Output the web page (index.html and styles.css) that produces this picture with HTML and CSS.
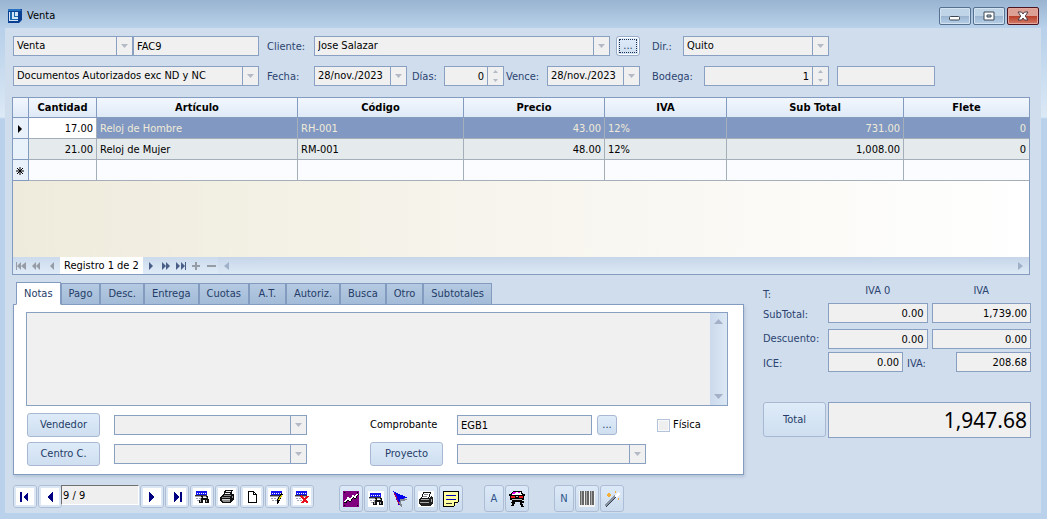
FILE: index.html
```html
<!DOCTYPE html>
<html lang="es">
<head>
<meta charset="utf-8">
<title>Venta</title>
<link rel="stylesheet" href="styles.css">
</head>
<body>
<svg class="defs" aria-hidden="true">
  <symbol id="down" viewBox="0 0 7 4"><path d="M0 0h7L3.500 4z"/></symbol>
  <symbol id="spin" viewBox="0 0 5 12"><path d="M0 3L2.500 0 5 3zM0 9h5L2.500 12z"/></symbol>
  <symbol id="table" viewBox="0 0 16 16">
    <path fill="#1414f0" d="M2 2h11v4H2z"/><path fill="#fff" d="M3 4h1v1H3zM5 4h1v1H5zM7 4h1v1H7zM9 4h1v1H9zM11 4h1v1h-1z"/>
    <path fill="#a4a4b4" d="M1 7h12v1H1zM2 9h2v1H2zM5 9h2v1H5zM8 9h2v1H8zM3 11h2v1H3zM6 11h2v1H6z"/>
    <path fill="#333" d="M1 6h12v1H1z"/>
  </symbol>
  <symbol id="find" viewBox="0 0 16 16">
    <use href="#table"/>
    <path fill="#111" d="M7 7h2v2h3V7h2v2l1 2v3h-4v-3H9v3H5v-3l2-2z"/><path fill="#aaa" d="M7 8h1v1H7zM12 8h1v1h-1zM6 10h1v3H6zM12 11h1v2h-1z"/>
  </symbol>
  <symbol id="printer" viewBox="0 0 16 16">
    <path fill="#111" d="M6 1h8v1h-1v3h2v5l-3 4H3l-2-3V8l3-3 1-1z"/>
    <path fill="#eee" d="M7 2h5v1H7zM6 4h5v1H6z"/><path fill="#8c8c8c" d="M5 6h7v1H5zM3 8h8v1H3zM13 7h1v2h-1zM3 11h8v2H4z"/><path fill="#ccc" d="M3 10h8v1H3z"/>
  </symbol>
</svg>
<div class="window">
  <header class="titlebar">
    <svg class="logo" viewBox="0 0 14 14"><path fill="#0b3f91" d="M0 0h14v11l-3 3H0z"/><path fill="#2673c4" d="M0 0h12l2 2H0z"/><path fill="#d3e6f6" d="M1 3h9v9H1z"/><path fill="#1a67b0" d="M2 3h2v7h6v1H2zM6 3h1v4h3v1H6z"/></svg>
    <h1>Venta</h1>
    <div class="controls">
      <button class="control" type="button" aria-label="Minimizar"><svg viewBox="0 0 12 12"><rect x=".5" y="6.500" width="10" height="3.500" rx="1" fill="#fff" stroke="#3d4653"/></svg></button>
      <button class="control" type="button" aria-label="Maximizar"><svg viewBox="0 0 12 12"><path fill="#fff" fill-rule="evenodd" stroke="#3d4653" d="M1 2h10v8H1zM4 5v2h4V5z"/></svg></button>
      <button class="control close" type="button" aria-label="Cerrar"><svg viewBox="0 0 12 12"><path fill="#fff" stroke="#4c3b45" d="M1 2h3.500L6 4l1.500-2H11L8.300 6 11 10H7.500L6 8l-1.500 2H1l2.700-4z"/></svg></button>
    </div>
  </header>
  <main class="content">
    <section class="filters">
      <div class="line first">
        <span class="combo type"><select aria-label="Tipo"><option>Venta</option></select><svg class="arrow"><use href="#down"/></svg></span>
        <input class="grow" aria-label="Número" value="FAC9">
      </div>
      <div class="line">
        <label class="lead" for="cliente">Cliente:</label>
        <span class="combo grow"><select id="cliente"><option>Jose Salazar</option></select><svg class="arrow"><use href="#down"/></svg></span>
        <button class="push more focused" type="button">...</button>
      </div>
      <div class="line">
        <label class="dir" for="dir">Dir.:</label>
        <span class="combo address"><select id="dir"><option>Quito</option></select><svg class="arrow"><use href="#down"/></svg></span>
      </div>
      <div class="line">
        <span class="combo grow"><select aria-label="Autorización"><option>Documentos Autorizados exc ND y NC</option></select><svg class="arrow"><use href="#down"/></svg></span>
      </div>
      <div class="line">
        <label class="lead" for="fecha">Fecha:</label>
        <span class="combo grow"><select id="fecha"><option>28/nov./2023</option></select><svg class="arrow"><use href="#down"/></svg></span>
        <label class="days" for="dias">Días:</label>
        <span class="combo count"><input class="num" id="dias" value="0"><svg class="arrow spin"><use href="#spin"/></svg></span>
        <label class="due" for="vence">Vence:</label>
        <span class="combo grow"><select id="vence"><option>28/nov./2023</option></select><svg class="arrow"><use href="#down"/></svg></span>
      </div>
      <div class="line">
        <label class="store" for="bodega">Bodega:</label>
        <span class="combo warehouse"><input class="num" id="bodega" value="1"><svg class="arrow spin"><use href="#spin"/></svg></span>
        <input class="extra" aria-label="Nombre de bodega">
      </div>
    </section>

    <section class="grid">
      <table>
        <colgroup><col class="c-mark"><col class="c-qty"><col class="c-item"><col class="c-code"><col class="c-price"><col class="c-iva"><col class="c-sub"><col class="c-freight"></colgroup>
        <thead><tr><th></th><th>Cantidad</th><th>Artículo</th><th>Código</th><th>Precio</th><th>IVA</th><th>Sub Total</th><th>Flete</th></tr></thead>
        <tbody>
          <tr class="selected"><th><svg class="mark" viewBox="0 0 8 8"><path d="M2 0l4 4-4 4z"/></svg></th><td class="num current">17.00</td><td>Reloj de Hombre</td><td>RH-001</td><td class="num">43.00</td><td>12%</td><td class="num">731.00</td><td class="num">0</td></tr>
          <tr class="even"><th></th><td class="num">21.00</td><td>Reloj de Mujer</td><td>RM-001</td><td class="num">48.00</td><td>12%</td><td class="num">1,008.00</td><td class="num">0</td></tr>
          <tr><th><svg class="mark" viewBox="0 0 8 8"><path fill="none" stroke="#000" d="M4 0v8M0 4h8M1 1l6 6M7 1L1 7"/></svg></th><td></td><td></td><td></td><td></td><td></td><td></td><td></td></tr>
        </tbody>
      </table>
      <div class="blank"></div>
      <div class="pager">
        <button type="button" class="off" aria-label="Primero"><svg viewBox="0 0 10 8"><path d="M0 0h1v8H0zM5 0v8L1 4zM10 0v8L5 4z"/></svg></button>
        <button type="button" class="off" aria-label="Página anterior"><svg viewBox="0 0 10 8"><path d="M5 0v8L1 4zM9 0v8L5 4z"/></svg></button>
        <button type="button" class="off" aria-label="Anterior"><svg viewBox="0 0 10 8"><path d="M7 0v8L3 4z"/></svg></button>
        <span class="record">Registro 1 de 2</span>
        <button type="button" aria-label="Siguiente"><svg viewBox="0 0 10 8"><path d="M3 0v8l4-4z"/></svg></button>
        <button type="button" aria-label="Página siguiente"><svg viewBox="0 0 10 8"><path d="M1 0v8l4-4zM5 0v8l4-4z"/></svg></button>
        <button type="button" aria-label="Último"><svg viewBox="0 0 10 8"><path d="M9 0h1v8H9zM0 0v8l4-4zM5 0v8l4-4z"/></svg></button>
        <button type="button" class="off" aria-label="Agregar"><svg viewBox="0 0 10 8"><path d="M1 3h8v2H1zM4 0h2v8H4z"/></svg></button>
        <button type="button" class="off" aria-label="Quitar"><svg viewBox="0 0 10 8"><path d="M1 3h9v2H1z"/></svg></button>
        <span class="scroll"><svg viewBox="0 0 5 8"><path d="M5 0v8L0 4z"/></svg><svg viewBox="0 0 5 8"><path d="M0 0v8l5-4z"/></svg></span>
      </div>
    </section>

    <div class="lower">
      <section class="details">
        <nav class="tabs" role="tablist">
          <button type="button" role="tab" aria-selected="true">Notas</button><button type="button" role="tab">Pago</button><button type="button" role="tab">Desc.</button><button type="button" role="tab">Entrega</button><button type="button" role="tab">Cuotas</button><button type="button" role="tab">A.T.</button><button type="button" role="tab">Autoriz.</button><button type="button" role="tab">Busca</button><button type="button" role="tab">Otro</button><button type="button" role="tab">Subtotales</button>
        </nav>
        <div class="panel">
          <div class="notes">
            <textarea aria-label="Notas"></textarea>
            <span class="rail"><svg viewBox="0 0 9 5"><path d="M0 5h9L4.500 0z"/></svg><svg viewBox="0 0 9 5"><path d="M0 0h9L4.500 5z"/></svg></span>
          </div>
          <div class="fields">
            <button class="push" type="button">Vendedor</button>
            <span class="combo"><select aria-label="Vendedor"><option></option></select><svg class="arrow"><use href="#down"/></svg></span>
            <label class="voucher" for="comp">Comprobante</label>
            <div class="line">
              <input class="voucher-no" id="comp" value="EGB1">
              <button class="push small" type="button">...</button>
              <label class="check"><input type="checkbox">Física</label>
            </div>
            <button class="push" type="button">Centro C.</button>
            <span class="combo"><select aria-label="Centro de costo"><option></option></select><svg class="arrow"><use href="#down"/></svg></span>
            <button class="push offset" type="button">Proyecto</button>
            <span class="combo project"><select aria-label="Proyecto"><option></option></select><svg class="arrow"><use href="#down"/></svg></span>
          </div>
        </div>
      </section>
      <section class="totals">
        <div class="row heads"><span class="name">T:</span><span class="head">IVA 0</span><span class="head">IVA</span></div>
        <div class="row"><label class="name" for="st">SubTotal:</label><input class="num" id="st" value="0.00"><input class="num" aria-label="SubTotal IVA" value="1,739.00"></div>
        <div class="row disc"><label class="name" for="ds">Descuento:</label><input class="num" id="ds" value="0.00"><input class="num" aria-label="Descuento IVA" value="0.00"></div>
        <div class="row"><label class="name" for="ice">ICE:</label><input class="num tax" id="ice" value="0.00"><label class="iva" for="iva">IVA:</label><input class="num tax" id="iva" value="208.68"></div>
        <div class="grand"><button class="push" type="button">Total</button><input class="num" aria-label="Total" value="1,947.68"></div>
      </section>
    </div>

    <footer class="toolbar">
      <div class="group nav">
        <button class="tool" type="button" aria-label="Primero"><svg viewBox="0 0 16 16"><path fill="#000080" d="M3 3h2v10H3zM11 3v10L6 8z"/></svg></button>
        <button class="tool" type="button" aria-label="Anterior"><svg viewBox="0 0 16 16"><path fill="#000080" d="M11 3v10L5 8z"/></svg></button>
        <input class="position" aria-label="Posición" value="9 / 9">
        <button class="tool" type="button" aria-label="Siguiente"><svg viewBox="0 0 16 16"><path fill="#000080" d="M5 3v10l6-5z"/></svg></button>
        <button class="tool" type="button" aria-label="Último"><svg viewBox="0 0 16 16"><path fill="#000080" d="M11 3h2v10h-2zM5 3v10l5-5z"/></svg></button>
        <button class="tool" type="button" aria-label="Buscar"><svg viewBox="0 0 16 16"><use href="#find"/></svg></button>
        <button class="tool" type="button" aria-label="Imprimir"><svg viewBox="0 0 16 16"><use href="#printer"/></svg></button>
        <button class="tool" type="button" aria-label="Nuevo"><svg viewBox="0 0 16 16"><path fill="#fff" stroke="#000" d="M4.500 2.500h5l3 3v8h-8zM9.500 2.500v3h3"/></svg></button>
        <button class="tool" type="button" aria-label="Editar"><svg viewBox="0 0 16 16"><use href="#table"/><path fill="#000" d="M12 4l2 1-4 8-2 2v-4z"/><path fill="#d4c800" d="M12 6l1 1-3 5-1-1z"/></svg></button>
        <button class="tool" type="button" aria-label="Eliminar"><svg viewBox="0 0 16 16"><use href="#table"/><path fill="none" stroke="#e8101c" stroke-width="2" d="M7 7l7 7M14 7l-6 7"/></svg></button>
      </div>
      <div class="group tall actions">
        <button class="tool" type="button" aria-label="Gráfico"><svg viewBox="0 0 16 16"><path fill="#800080" d="M0 0h16v16H0z"/><path fill="#000" d="M1 1h1v1H1zM14 1h1v1h-1zM1 14h1v1H1zM14 14h1v1h-1z"/><path fill="none" stroke="#000" stroke-width="2" d="M2 12l3-4 2 2 3-4 2 1 3-4"/><path fill="none" stroke="#fff" stroke-width="1.500" d="M2 11l3-4 2 2 3-4 2 1 2-3"/></svg></button>
        <button class="tool" type="button" aria-label="Buscar documento"><svg viewBox="0 0 16 16"><path fill="#fff" d="M0 0h16v16H0z"/><use href="#find"/></svg></button>
        <button class="tool" type="button" aria-label="Seleccionar"><svg viewBox="0 0 16 16"><path fill="#808890" d="M1 1l7 15 1-1-1-5 7-1z"/><path fill="#0000f0" d="M0 0l15 7-8 1-1 7z"/><path fill="#a00060" d="M0 0l3 4 4 10H6z"/></svg></button>
        <button class="tool" type="button" aria-label="Imprimir documento"><svg viewBox="0 0 16 16"><path fill="#fff" d="M0 0h16v16H0z"/><path fill="#fff" stroke="#111" d="M5.500 1.500h7l-2 6h-7z"/><path stroke="#888" d="M6 3.500h4M5 5.500h4"/><path fill="#222" d="M1 8l2-2v2h8l2-3 2 1v6l-3 3H3l-2-2z"/><path fill="#aaa" d="M3 8h8v1H3zM2 11h9v1H2zM13 8h1v3h-1z"/></svg></button>
        <button class="tool" type="button" aria-label="Nota"><svg viewBox="0 0 16 16"><path fill="#ffffa0" d="M1 1h14v10l-4 4H1z"/><path fill="#000" d="M0 0h16v1H0zM0 0h1v16H0zM15 0h1v11h-1zM0 15h11v1H0zM11 11h4v1h-3v3h-1z"/><path fill="#0000c0" d="M3 4h10v1H3zM3 8h10v1H3z"/><path fill="#333" d="M3 12h6v1H3z"/></svg></button>
      </div>
      <div class="group tall letters">
        <button class="tool letter" type="button">A</button>
        <button class="tool" type="button" aria-label="Transporte"><svg viewBox="0 0 16 16"><path fill="#000" d="M4 0h9l1 3h2v2h-1v4h-2v1h2v2h-2v1h1v2h1v1h-3v-2h-1v-3H6v2H5v2H2v-1h1v-2H2v-1h1V9H1V5H0V3h2z"/><path fill="#fff" d="M5 1h7l1 3H3z"/><path fill="#f000f0" d="M4 1h3v1H6v1H3zM9 1h2v1H9z"/><path fill="#f01818" d="M2 5h4v2H2zM10 5h4v2h-4z"/><path fill="#bbb" d="M7 5h2v1H7zM3 8h10v1H3z"/></svg></button>
      </div>
      <div class="group tall extras">
        <button class="tool letter" type="button">N</button>
        <button class="tool" type="button" aria-label="Código de barras"><svg viewBox="0 0 16 16"><path fill="#f4f4f4" d="M0 0h16v16H0z"/><path fill="#666" d="M1 0h1v14H1zM3 0h2v14H3zM6 0h1v14H6zM8 0h2v14H8zM11 0h1v14h-1zM13 0h2v14h-2z"/><path fill="#aaa" d="M2 0h1v14H2zM7 0h1v14H7zM12 0h1v14h-1z"/></svg></button>
        <button class="tool" type="button" aria-label="Asistente"><svg viewBox="0 0 16 16"><path stroke="#8a95a4" stroke-width="2" d="M1 15L11 5"/><path stroke="#333f50" stroke-width="1" d="M2 16L12 6"/><path fill="#fff" d="M10 5l4-4 2 2-4 4z"/><path fill="#f5ae35" d="M5 1l1 2 2 1-2 1-1 2-1-2-2-1 2-1zM11 0l1 1-1 1-1-1zM14 7l1 1-1 1-1-1z"/></svg></button>
      </div>
    </footer>
  </main>
</div>
</body>
</html>
```
FILE: styles.css
```css
* { box-sizing: border-box; }
body { margin: 0; }
body, button, input, select, textarea {
  font: 11px/14px "DejaVu Sans Condensed", "DejaVu Sans", sans-serif;
  color: #000;
}
button, input, select, textarea { margin: 0; padding: 0; border: 0; border-radius: 0; }
svg { display: block; }
.defs { position: absolute; width: 0; height: 0; }
label, .totals { color: #2b4470; }

.window {
  min-height: 100vh;
  display: flex;
  flex-direction: column;
  padding: 0 6px 6px 5px;
  background: linear-gradient(#99b4d1, #b9d1ea 28px, #b9d1ea 34px, #dce9f6 117px, #b9d1ea 119px);
}
.titlebar { height: 28px; display: flex; align-items: center; gap: 5px; padding: 4px 2px 0 3px; }
.titlebar h1 { flex: 1; margin: 0; font-size: 11px; font-weight: 400; }
.logo { width: 14px; height: 14px; }
.controls { display: flex; gap: 2px; }
.control {
  width: 32px;
  height: 18px;
  display: grid;
  place-items: center;
  border: 1px solid #56718f;
  border-radius: 2px;
  box-shadow: inset 0 0 0 1px #d3e3f2;
  background: linear-gradient(#c0d4e8 50%, #9ab4d0 50%, #b7d0e8);
}
.control svg { width: 12px; height: 12px; }
.control.close { border-color: #4c1420; box-shadow: inset 0 0 0 1px #e5a79e; background: linear-gradient(#dda095 50%, #b83d28 50%, #d27c68); }

.content { flex: 1; padding: 8px 11px 0 8px; background: #d0dded; }
.filters {
  display: grid;
  grid-template-columns: 246px minmax(373px, 1fr) 382px;
  gap: 10px 8px;
}
.line { display: flex; align-items: center; }
.filters .line:nth-child(3n) { padding-left: 4px; }
.filters label { padding-top: 2px; }
.grow { flex: 1; min-width: 0; }
.combo, .line > input, .totals input {
  height: 20px;
  border: 1px solid #8aa0c2;
  background: #f0f0f0;
}
.combo { display: grid; grid-template-columns: minmax(0, 1fr) 16px; }
.combo > select, .combo > input {
  grid-area: 1 / 1 / 2 / 3;
  width: 100%;
  height: 18px;
  appearance: none;
  background: none;
  padding: 0 19px 0 3px;
}
.line > input { padding: 0 3px; }
.num { text-align: right; }
.arrow {
  grid-area: 1 / 2;
  width: 16px;
  height: 18px;
  padding: 7px 4px 7px 4px;
  border-left: 1px solid #8aa0c2;
  fill: #b4b9c6;
  pointer-events: none;
}
.arrow.spin { padding: 3px 5px; }
.type { width: 120px; }
.lead { width: 47px; }
.dir { width: 31px; }
.days { width: 37px; padding-left: 5px; }
.due { width: 43px; padding-left: 2px; }
.store { width: 52px; }
.address { width: 146px; }
.count { width: 60px; }
.warehouse { width: 125px; }
.line > .extra { width: 98px; margin-left: 8px; }

.push {
  border: 1px solid #a8b8d2;
  border-radius: 3px;
  background: linear-gradient(#deebf9, #cfdff0);
  color: #243c68;
}
.more { width: 24px; height: 20px; margin-left: 6px; }
.small { width: 20px; height: 20px; margin-left: 5px; }
.focused { border-color: #98acc9; outline: 1px dotted #203050; outline-offset: -4px; box-shadow: inset 0 0 0 1px #fff; }

.grid { margin: 11px 0 0 -1px; border: 1px solid #839bbe; }
table { width: 100%; table-layout: fixed; border-spacing: 0; background: #fafcff; }
.c-mark { width: 16px; }
.c-qty { width: 68px; }
.c-item { width: 201px; }
.c-code { width: 166px; }
.c-price { width: 141px; }
.c-iva { width: 122px; }
.c-sub { width: 177px; }
.c-freight { width: 125px; }
th, td { height: 21px; padding: 2px 3px 0; border: 0 solid #a5afb9; border-width: 0 1px 1px 0; text-align: left; white-space: nowrap; }
th { background: #e9f1fb; border-color: #839bbe; }
thead th { height: 20px; padding: 0; text-align: center; background: linear-gradient(#f2f7fd, #dfeaf7); }
th:last-child, td:last-child { border-right: 0; }
td.num { text-align: right; }
.selected td { background: #8098c2; color: #f0ebd8; }
.selected td.current { background: #fff; color: #000; }
.even td { background: #e5eaec; }
.mark { width: 8px; height: 8px; }
.blank { height: 76px; background: linear-gradient(90deg, #efebdc, #fff); }
.pager { display: flex; height: 17px; background: linear-gradient(#cbdbed, #e0ebf7); }
.pager button { width: 15px; display: grid; place-items: center; background: none; fill: #4a5f88; }
.pager .off { fill: #969ca6; }
.pager button svg { width: 10px; height: 8px; }
.pager button:nth-child(3) { width: 17px; }
.record { width: 83px; text-align: center; line-height: 18px; background: #fff; }
.scroll { flex: 1; display: flex; justify-content: space-between; align-items: center; padding: 0 6px; background: linear-gradient(#c6d6e9, #dce8f4); fill: #a0b0c9; }
.scroll svg { width: 5px; height: 8px; }

.lower { display: flex; gap: 19px; margin: 7px -1px 0 0; }
.details { flex: 1; min-width: 0; }
.tabs { display: flex; align-items: flex-end; height: 23px; padding-left: 3px; position: relative; z-index: 1; }
.tabs button {
  height: 22px;
  min-width: 37px;
  padding: 0 7px;
  border: 1px solid #839bbe;
  background: linear-gradient(#b5cae2, #a3bbd8);
  color: #243c68;
}
.tabs [aria-selected="true"] { height: 23px; border-bottom-color: #fff; background: #fff; }
.panel { margin-top: -1px; padding: 7px 15px 8px 12px; border: 1px solid #839bbe; background: #fff; box-shadow: 1px 2px 3px #b4c3d8; }
.notes { display: flex; height: 94px; border: 1px solid #8aa0c2; background: #f0f0f0; }
.notes textarea { flex: 1; resize: none; background: none; }
.rail { width: 17px; display: flex; flex-direction: column; justify-content: space-between; align-items: center; padding: 6px 0; background: linear-gradient(90deg, #cad9ec, #dce8f4); fill: #a3b0c8; }
.rail svg { width: 9px; height: 5px; }
.fields {
  display: grid;
  grid-template-columns: 73px 207px 150px 1fr;
  grid-auto-rows: 24px;
  align-items: center;
  gap: 5px 0;
  margin: 7px 0 0 1px;
}
.fields .combo { margin-left: 14px; }
.fields > .push { height: 24px; width: 73px; }
.fields > .offset, .voucher { margin-left: 63px; }
.fields > .project { margin: 0; width: 189px; }
.fields label { color: #000; }
.voucher-no { width: 135px; }
.check { display: flex; align-items: center; gap: 3px; margin-left: 40px; }
.check input { appearance: none; width: 13px; height: 13px; border: 1px solid #b3c3da; background: #efefef; box-shadow: inset 0 0 0 1px #f9f9f9; }

.totals { flex: 0 0 268px; min-width: 0; }
.row { display: flex; align-items: center; gap: 4px; }
.name { width: 61px; padding-top: 4px; white-space: nowrap; }
.heads { height: 21px; }
.head { flex: 1; padding-bottom: 4px; text-align: center; }
.row input { flex: 1; min-width: 0; padding: 0 3px; }
.disc { margin: 6px 0 3px; }
.disc .name { padding: 0; }
.row .tax { flex: 0 0 75px; }
.iva { flex: 1; padding-top: 4px; }
.grand { display: flex; gap: 2px; margin-top: 30px; }
.grand .push { width: 63px; height: 35px; }
.totals .grand input { flex: 1; min-width: 0; height: 36px; padding: 0 3px; font: 21px/34px "Noto Sans", sans-serif; }

.toolbar { display: flex; align-items: flex-start; margin-top: 10px; }
.group { display: flex; gap: 1px; }
.tool {
  width: 24px;
  height: 23px;
  display: grid;
  place-items: center;
  border: 1px solid #adbdd6;
  border-radius: 3px;
  background: linear-gradient(#dce9f8, #ccdcee);
  color: #2f5489;
}
.nav .tool { background: #fff; box-shadow: inset 0 0 0 2px #dbe7f4; }
.tool svg { width: 16px; height: 16px; shape-rendering: crispEdges; }
.tall .tool { height: 27px; }
.tall .letter { width: 20px; }
.position { width: 78px; height: 20px; margin-left: -2px; padding: 0 1px; background: #efefef; border: 1px solid; border-color: #707070 #fff #fff #707070; }
.actions { margin-left: 25px; }
.letters { margin-left: 21px; }
.extras { margin-left: 25px; }
```
